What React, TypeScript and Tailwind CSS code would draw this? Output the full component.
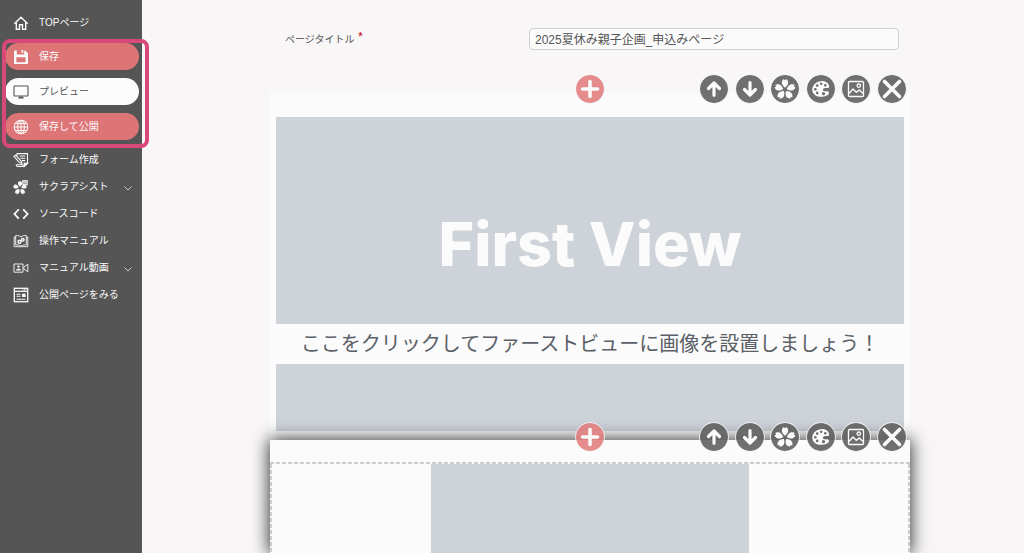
import { useState, type ReactNode } from "react";
import clsx from "clsx";

const PETAL = "M0-1.6C-2-3.2-3.1-5-2.7-6.8C-2.4-8.1-1.7-8.9-1-9.3L0-8L1-9.3C1.7-8.9 2.4-8.1 2.7-6.8C3.1-5 2-3.2 0-1.6Z";

function Sakura() {
  return (
    <>
      {[0, 72, 144, 216, 288].map((deg) => (
        <path key={deg} d={PETAL} transform={`rotate(${deg})`} fill="currentColor" stroke="none" />
      ))}
    </>
  );
}

function SideIcon({ children }: { children: ReactNode }) {
  return (
    <svg
      viewBox="0 0 16 16"
      className="size-4 shrink-0"
      fill="none"
      stroke="currentColor"
      strokeWidth="1.1"
      aria-hidden="true"
    >
      {children}
    </svg>
  );
}

const icons = {
  home: (
    <SideIcon>
      <path d="M1.3 8.7 8 2.3l6.7 6.4M3.3 7.6v6.6h3.2V9.8h3v4.4h3.2V7.6" strokeWidth="1.4" />
    </SideIcon>
  ),
  save: (
    <SideIcon>
      <path
        d="M2 1.5h1.8v4h7.4v-4h.9L15 4.2V14a1 1 0 0 1-1 1H2a1 1 0 0 1-1-1V2.5a1 1 0 0 1 1-1ZM3.4 8.3v4.9h9.2V8.3ZM8.600 1h1.600v3H8.600Z"
        fill="currentColor"
        fillRule="evenodd"
        stroke="none"
      />
    </SideIcon>
  ),
  preview: (
    <SideIcon>
      <rect x="1" y="2" width="14" height="10" rx=".6" />
      <path d="M6 12.5h4l.8 2H5.2Z" fill="currentColor" stroke="none" />
    </SideIcon>
  ),
  publish: (
    <SideIcon>
      <circle cx="8" cy="8" r="6.8" />
      <ellipse cx="8" cy="8" rx="3.4" ry="6.8" />
      <path d="M8 1.2v13.600M1.2 8h13.600M2.3 4.5h11.400M2.3 11.5h11.400" />
    </SideIcon>
  ),
  form: (
    <SideIcon>
      <path d="M4 4V1.6h10.5v9.6l-3.3 3.3H4.8c-1 0-1.6-.8-1.6-1.8h6.6v1.8M6.5 4h5.7M7.3 6.3h4.900M9 8.6h3.2" />
      <path d="M14.5 11.2h-3.3v3.3Z" fill="currentColor" />
      <path d="M1 4.3 2.7 3.2 8.3 9.3 8.8 11.5 6.6 10.8Z" fill="#555" />
    </SideIcon>
  ),
  assist: (
    <SideIcon>
      <g transform="translate(7 9) scale(.76)">
        <Sakura />
      </g>
      <path d="M9.2 1.2h5.600v5H9.200Z" fill="currentColor" stroke="none" />
      <path d="M9.8 3h4.400M9.8 4.700h4.400" stroke="#555" strokeWidth=".6" />
    </SideIcon>
  ),
  code: (
    <SideIcon>
      <path d="M5.8 3.3 1.4 8l4.400 4.700M10.2 3.3 14.6 8l-4.400 4.700" strokeWidth="1.8" />
    </SideIcon>
  ),
  manual: (
    <SideIcon>
      <path
        d="M8 4C6.5 2.7 4.7 2.4 2.7 2.6v9.3c2 0 3.8.2 5.3 1.3 1.5-1.1 3.3-1.3 5.3-1.3V2.6C11.3 2.4 9.5 2.7 8 4ZM2.7 4H1.2v9.7h13.600V4h-1.5"
        strokeWidth=".9"
      />
      <circle cx="6.5" cy="8.7" r="1.5" strokeWidth="1.4" />
      <circle cx="9.8" cy="6.8" r="1.3" strokeWidth="1.4" />
    </SideIcon>
  ),
  video: (
    <SideIcon>
      <path d="M1 4h9v8.2H1ZM10.8 7.2 14.8 4.3v7.600L10.8 9Z" strokeWidth=".9" />
      <circle cx="5.5" cy="6.6" r="1.2" fill="currentColor" stroke="none" />
      <path d="M3 10.6c0-2.4 5-2.4 5 0Z" fill="currentColor" stroke="none" />
    </SideIcon>
  ),
  page: (
    <SideIcon>
      <rect x="1.3" y="1.3" width="13.4" height="13.4" strokeWidth="1.3" />
      <path d="M1.3 4.3h13.400" strokeWidth="1.3" />
      <path d="M9.5 2.8h4" strokeDasharray="1 .5" />
      <path d="M3.5 7.2h4M3.5 9.2h4M3.5 12.2h9" />
      <path d="M9 6.7h3.600v3.300H9Z" fill="currentColor" stroke="none" />
    </SideIcon>
  ),
};

const pills = [
  { icon: icons.save, label: "保存", className: "bg-[#dd7476]" },
  { icon: icons.preview, label: "プレビュー", className: "bg-[#fcfcfc] text-[#555]" },
  { icon: icons.publish, label: "保存して公開", className: "bg-[#dd7476]" },
];

const links = [
  { icon: icons.form, label: "フォーム作成" },
  { icon: icons.assist, label: "サクラアシスト", expandable: true },
  { icon: icons.code, label: "ソースコード" },
  { icon: icons.manual, label: "操作マニュアル" },
  { icon: icons.video, label: "マニュアル動画", expandable: true },
  { icon: icons.page, label: "公開ページをみる" },
];

function Sidebar() {
  return (
    <nav className="w-[142px] shrink-0 bg-[#555] pt-[9px] text-[10px] text-[#fafafa]">
      <a href="#top" className="flex h-[27px] items-center gap-[10px] pl-[13px]">
        {icons.home}
        TOPページ
      </a>
      <div className="relative mt-[7px] mb-[6px] flex flex-col gap-2 pr-[3px] pl-[5px]">
        {pills.map((pill) => (
          <button
            key={pill.label}
            type="button"
            className={clsx("flex h-[27px] items-center gap-[10px] rounded-full pl-2", pill.className)}
          >
            {pill.icon}
            {pill.label}
          </button>
        ))}
        <div className="pointer-events-none absolute -top-1 -right-[7px] -bottom-2 left-[2px] z-20 rounded-lg border-4 border-[#d84878]" />
      </div>
      {links.map((link) => (
        <a key={link.label} href="#menu" className="flex h-[27px] items-center gap-[10px] pl-[13px]">
          {link.icon}
          {link.label}
          {link.expandable && (
            <svg viewBox="0 0 8 5" className="mt-1 mr-[10px] ml-auto h-[5px] w-2" fill="none" stroke="#ccc" aria-hidden="true">
              <path d="M.5.5 4 4 7.5.5" />
            </svg>
          )}
        </a>
      ))}
    </nav>
  );
}

function RoundButton({ label, color, children }: { label: string; color: string; children: ReactNode }) {
  return (
    <button
      type="button"
      aria-label={label}
      className={clsx("size-[30px] rounded-full border border-[#f3f3f3]/80 bg-clip-padding text-[#fbfbfb]", color)}
    >
      <svg viewBox="-14 -14 28 28" className="size-7" fill="none" stroke="currentColor" aria-hidden="true">
        {children}
      </svg>
    </button>
  );
}

function BlockToolbar() {
  const dark = "bg-[#606060]/90";
  return (
    <div className="absolute inset-x-0 -top-[18px] z-10 flex justify-end pr-[3px]">
      <div className="absolute left-1/2 -translate-x-1/2">
        <RoundButton label="追加" color="bg-[#e28080]/90">
          <path d="M0-7.5V7.5M-7.5 0H7.5" strokeWidth="3.6" strokeLinecap="round" />
        </RoundButton>
      </div>
      <div className="flex w-[208px] justify-between">
        <RoundButton label="上へ" color={dark}>
          <path d="M0 6.3V-5.5M-5.5-.5 0-6 5.5-.5" strokeWidth="3.2" strokeLinecap="round" strokeLinejoin="round" />
        </RoundButton>
        <RoundButton label="下へ" color={dark}>
          <path d="M0-6.3V5.5M-5.5.5 0 6 5.5.5" strokeWidth="3.2" strokeLinecap="round" strokeLinejoin="round" />
        </RoundButton>
        <RoundButton label="サクラアシスト" color={dark}>
          <g transform="translate(0 .5) scale(1.14)">
            <Sakura />
          </g>
        </RoundButton>
        <RoundButton label="配色" color={dark}>
          <path
            d="M8-3.5C7-6.8 3.3-8.5-.5-7.8-5.5-7-9-3.2-8.7 1-8.5 5-4.8 8 0 7.8 4 7.6 7.8 6.3 8 3.9 8.1 2.2 5.8 2.2 4 2.3 2 2.4 1.3 1 2.3-.2 3.5-1.6 5.7-.8 7.2-1 8-1.2 8.3-2.3 8-3.5Z"
            fill="currentColor"
            stroke="none"
          />
          <g fill="#6e6e6e" stroke="none">
            <circle cx="4.3" cy="-3.7" r="1.3" />
            <circle cx=".2" cy="-5.3" r="1.3" />
            <circle cx="-3.8" cy="-3.4" r="1.3" />
            <circle cx="-5.7" cy=".3" r="1.3" />
            <circle cx="-3.8" cy="3.9" r="1.3" />
            <circle cx="2.5" cy="4.7" r="1.6" />
          </g>
        </RoundButton>
        <RoundButton label="画像" color={dark}>
          <rect x="-7.5" y="-7.5" width="15" height="15" rx="1" strokeWidth="1.3" />
          <circle cx="2.8" cy="-3.3" r="1.7" strokeWidth="1.3" />
          <path d="M-7 4.5-3 0 .3 3.3 3.3 1 7 4.5" strokeWidth="1.4" />
        </RoundButton>
        <RoundButton label="削除" color={dark}>
          <path d="M-7.5-7.5 7.5 7.5M7.5-7.5-7.5 7.5" strokeWidth="3.6" strokeLinecap="round" />
        </RoundButton>
      </div>
    </div>
  );
}

export default function App() {
  const [title, setTitle] = useState("2025夏休み親子企画_申込みページ");

  return (
    <div className="flex h-screen overflow-hidden bg-[#f8f6f7] font-['Liberation_Sans','Noto_Sans_CJK_JP',sans-serif] text-[#555]">
      <Sidebar />
      <main className="flex flex-1 flex-col pt-7 pl-[14px]">
        <div className="mx-auto flex w-full max-w-[640px] flex-1 flex-col">
          <div className="flex h-[22px] items-center pr-[11px] pl-[15px]">
            <label htmlFor="page-title" className="w-[244px] text-[10px]">
              ページタイトル
              <span className="ml-1 align-top text-[10px] leading-none font-bold text-[#c8282d]">*</span>
            </label>
            <input
              id="page-title"
              type="text"
              value={title}
              onChange={(e) => setTitle(e.target.value)}
              className="h-[22px] min-w-0 flex-1 rounded border border-[#d0d0d0] bg-[#fbfbfb] px-[5px] pb-[2px] text-xs"
            />
          </div>

          <section className="relative mt-[42px] bg-[#fbfbfb] px-[6px] pt-[25px] pb-[9px]">
            <BlockToolbar />
            <div className="flex h-[207px] items-center justify-center bg-[#ced2d9] pt-12">
              <h1 className="font-[Inter] text-[61px] leading-none font-extrabold text-[#fbfbfb]">First View</h1>
            </div>
            <p className="flex h-10 items-center justify-center text-xl whitespace-nowrap text-[#5b5f67]">
              ここをクリックしてファーストビューに画像を設置しましょう！
            </p>
            <div className="h-[67px] bg-[#ced2d9]" />
          </section>

          <section className="relative flex flex-1 flex-col bg-[#fbfbfb] pt-[22px] shadow-[0_0_16px_1px_#333]">
            <BlockToolbar />
            {/* dashed drop area, dashes are shorter than what border-dashed gives */}
            <div className="h-[2px] bg-[repeating-linear-gradient(90deg,#ccc_0_4px,transparent_4px_6px)]" />
            <div className="flex flex-1 justify-between">
              <div className="w-[2px] bg-[repeating-linear-gradient(#ccc_0_4px,transparent_4px_6px)]" />
              <div className="w-[318px] bg-[#ced2d9]" />
              <div className="w-[2px] bg-[repeating-linear-gradient(#ccc_0_4px,transparent_4px_6px)]" />
            </div>
          </section>
        </div>
      </main>
    </div>
  );
}
